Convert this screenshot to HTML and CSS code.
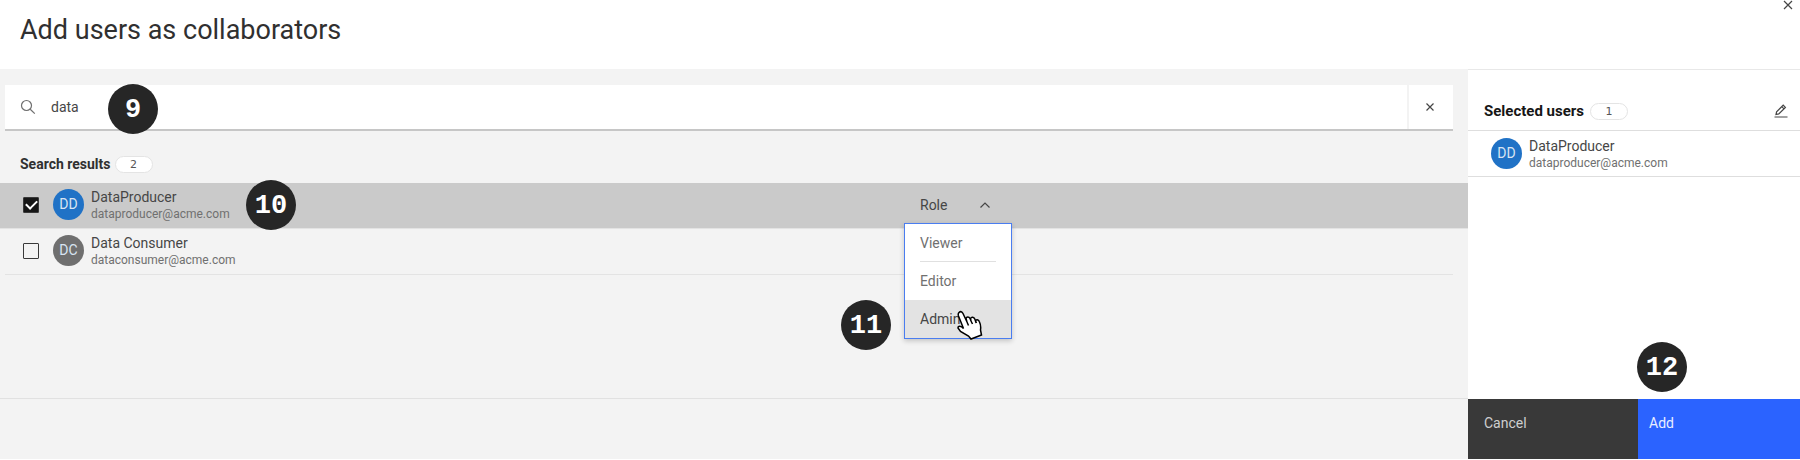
FILE: index.html
```html
<!DOCTYPE html>
<html lang="en">
<head>
<meta charset="utf-8">
<meta name="viewport" content="width=device-width, initial-scale=1">
<title>Add users as collaborators</title>
<link rel="stylesheet" href="styles.css">
</head>
<body>
<div class="page">
  <header class="header">
    <h1 class="title">Add users as collaborators</h1>
    <button class="icon-button close" aria-label="Close">
      <svg width="10" height="10" viewBox="0 0 10 10"><path d="M1 1l8 8M9 1l-8 8"/></svg>
    </button>
  </header>

  <div class="content">
    <main class="main">
      <form class="search">
        <label class="search-label" for="query" aria-label="Search users">
          <svg width="16" height="16" viewBox="0 0 16 16"><circle cx="6.5" cy="6.5" r="5"/><path d="M10.2 10.2l4.6 4.4"/></svg>
        </label>
        <input class="search-input" id="query" type="text" value="data">
        <button class="icon-button clear" type="button" aria-label="Clear search">
          <svg width="10" height="10" viewBox="0 0 10 10"><path d="M1.5 1.5l7 7M8.5 1.5l-7 7"/></svg>
        </button>
        <span class="step step-9">9</span>
      </form>

      <h2 class="results-heading">Search results <span class="count">2</span></h2>

      <ul class="results">
        <li class="row selected">
          <input class="check" type="checkbox" id="u1" checked>
          <label class="user" for="u1">
            <span class="avatar blue">DD</span>
            <span class="who"><span class="name">DataProducer</span><span class="email">dataproducer@acme.com</span></span>
          </label>
          <span class="step step-10">10</span>
          <div class="role">
            <button class="role-toggle" type="button" aria-expanded="true">Role
              <svg width="12" height="8" viewBox="0 0 12 8"><path d="M1.5 6.5L6 2l4.5 4.5"/></svg>
            </button>
            <div class="menu">
              <button class="option" type="button"><span class="option-text">Viewer</span></button>
              <button class="option" type="button"><span class="option-text">Editor</span></button>
              <button class="option active" type="button"><span class="option-text">Admin</span></button>
              <svg class="pointer" width="28" height="32" viewBox="0 0 28 32"><path d="M2 2.5C3.600 1 5 1.500 6 3.500L10 12L9 8.500C9.500 6.500 12 6.500 13 8.500L14 11L13.500 8.500C14.500 6.500 17 7 17.800 9L18.500 11C19 9 21.500 9.500 22.300 11.500C24 15 24 17 23.500 20L24.500 25L14 29L11.500 26L3.500 21.500L1 18C1 15.500 4 15.500 6.500 18.500L1.500 6C1 4.500 1 3.500 2 2.500z"/><path d="M10 12l1.500 3.500M14 11l1.500 3M18.500 11l1 2"/></svg>
            </div>
            <span class="step step-11">11</span>
          </div>
        </li>
        <li class="row">
          <input class="check" type="checkbox" id="u2">
          <label class="user" for="u2">
            <span class="avatar grey">DC</span>
            <span class="who"><span class="name">Data Consumer</span><span class="email">dataconsumer@acme.com</span></span>
          </label>
        </li>
      </ul>
      <div class="main-footer"></div>
    </main>

    <aside class="side">
      <div class="side-heading">
        <h2 class="side-title">Selected users</h2>
        <span class="count">1</span>
        <button class="icon-button edit" aria-label="Edit selected users">
          <svg width="14" height="14" viewBox="0 0 14 14"><path d="M.5 13h13M2 10.500l.6-2.800L9.200 1.200l2.200 2.200L4.800 9.900zM7.800 2.600l2.200 2.200"/></svg>
        </button>
      </div>
      <div class="picked">
        <span class="avatar blue">DD</span>
        <span class="who"><span class="name">DataProducer</span><span class="email">dataproducer@acme.com</span></span>
      </div>
      <div class="actions">
        <button class="action cancel">Cancel</button>
        <button class="action add">Add</button>
        <span class="step step-12">12</span>
      </div>
    </aside>
  </div>
</div>
</body>
</html>
```
FILE: styles.css
```css
* { box-sizing: border-box; }
body {
  margin: 0;
  background: #fff;
  color: #464646;
  font-family: Roboto, "Liberation Sans", sans-serif;
  font-size: 14px;
  line-height: 18px;
}
h1, h2, ul { margin: 0; padding: 0; }
button, input { font: inherit; color: inherit; }
button { border: 0; padding: 0; background: none; cursor: pointer; }
svg { fill: none; stroke: #464646; stroke-width: 1.2; }

.page {
  display: flex;
  flex-direction: column;
  min-height: 100vh;
  padding-bottom: 1px;
}
.header {
  display: flex;
  align-items: flex-start;
  justify-content: space-between;
  height: 69px;
  padding-left: 20px;
}
.title {
  padding-top: 12px;
  font-size: 27px;
  font-weight: 400;
  line-height: 36px;
  color: #303030;
}
.icon-button { display: flex; align-items: center; justify-content: center; }
.close { width: 24px; height: 9px; }

.content { display: flex; flex: 1; }
.main {
  display: flex;
  flex: 1;
  flex-direction: column;
  padding-top: 16px;
  background: #f3f3f3;
}
.search {
  position: relative;
  display: flex;
  height: 46px;
  margin: 0 15px 0 5px;
  background: #fff;
  border-bottom: 2px solid #c6c6c6;
}
.search-label { display: flex; align-items: center; padding: 0 15px; }
.search-label svg { stroke: #6f6f6f; }
.search-input { flex: 1; padding: 0; border: 0; outline: 0; background: none; }
.clear { width: 46px; padding-right: 2px; border-left: 2px solid #f3f3f3; }

.results-heading {
  display: flex;
  align-items: center;
  gap: 4px;
  padding: 24px 20px 10px;
  font-size: 14px;
  font-weight: 700;
  color: #303030;
}
.count {
  width: 38px;
  height: 17px;
  border: 1px solid #e4e4e4;
  border-radius: 9px;
  background: #fff;
  color: #565656;
  font: 400 11px/15px "DejaVu Sans", sans-serif;
  text-align: center;
}
.results { list-style: none; }
.row {
  position: relative;
  display: flex;
  align-items: center;
  height: 46px;
  margin: 0 15px 0 5px;
  padding: 0 0 2px 18px;
  border-bottom: 1px solid #e3e3e3;
}
.row.selected {
  z-index: 1;
  margin: 0;
  padding-left: 23px;
  background: #cacaca;
}
.check {
  appearance: none;
  width: 16px;
  height: 16px;
  margin: 0 14px 0 0;
  border: 1px solid #393939;
  border-radius: 1px;
}
.check:checked { display: grid; place-items: center; background: #161616; }
.check:checked::after {
  content: "";
  width: 9px;
  height: 5px;
  margin-bottom: 3px;
  border: solid #fff;
  border-width: 0 0 2px 2px;
  rotate: -45deg;
}
.user, .picked { display: flex; align-items: center; gap: 7px; }
.avatar {
  width: 31px;
  height: 31px;
  border-radius: 50%;
  color: #d8e4f2;
  line-height: 31px;
  text-align: center;
}
.blue { background: #2072c6; }
.grey { background: #6f6f6f; }
.who { display: flex; flex-direction: column; }
.name { line-height: 18px; }
.email { font-size: 12px; line-height: 16px; color: #707070; }

.role { position: absolute; left: 904px; top: 0; width: 108px; }
.role-toggle {
  display: flex;
  align-items: center;
  justify-content: space-between;
  width: 100%;
  height: 44px;
  padding: 0 21px 0 16px;
}
.menu {
  position: absolute;
  top: 40px;
  left: 0;
  width: 108px;
  border: 1px solid #4a7df0;
  background: #fff;
  box-shadow: 0 2px 5px rgba(0, 0, 0, .2);
}
.option { display: block; width: 100%; padding: 0 15px; color: #707070; text-align: left; }
.option-text { display: block; height: 38px; line-height: 39px; }
.option:first-child .option-text { border-bottom: 1px solid #e0e0e0; }
.option.active { background: #e3e3e3; color: #464646; }
.pointer { position: absolute; left: 52px; top: 86px; fill: #fff; stroke: #000; stroke-width: 1.5; }

.main-footer { height: 61px; margin-top: auto; border-top: 1px solid #e1e1e1; }

.side {
  display: flex;
  flex-direction: column;
  width: 332px;
  border-top: 1px solid #e8e8e8;
}
.side-heading {
  display: flex;
  align-items: center;
  height: 61px;
  gap: 6px;
  padding: 22px 12px 0 16px;
  border-bottom: 1px solid #dedede;
}
.side-title { font-size: 15px; font-weight: 700; color: #161616; }
.edit { margin-left: auto; }
.picked { height: 46px; padding-left: 23px; border-bottom: 1px solid #dedede; }
.actions {
  position: relative;
  display: grid;
  grid-template-columns: 170fr 162fr;
  height: 60px;
  margin-top: auto;
}
.action { padding: 0 11px 12px; color: #e8eeff; text-align: left; }
.cancel { padding-left: 16px; background: #393939; color: #cfcfcf; }
.add { background: #2b63ff; }

.step {
  position: absolute;
  z-index: 2;
  width: 50px;
  height: 50px;
  border-radius: 50%;
  background: #262626;
  color: #fff;
  font: 700 27px/52px "Liberation Mono", monospace;
  text-align: center;
}
.step-9 { left: 103px; top: -1px; }
.step-10 { left: 246px; top: -3px; }
.step-11 { left: -63px; top: 117px; }
.step-12 { left: 169px; top: -57px; }
```
